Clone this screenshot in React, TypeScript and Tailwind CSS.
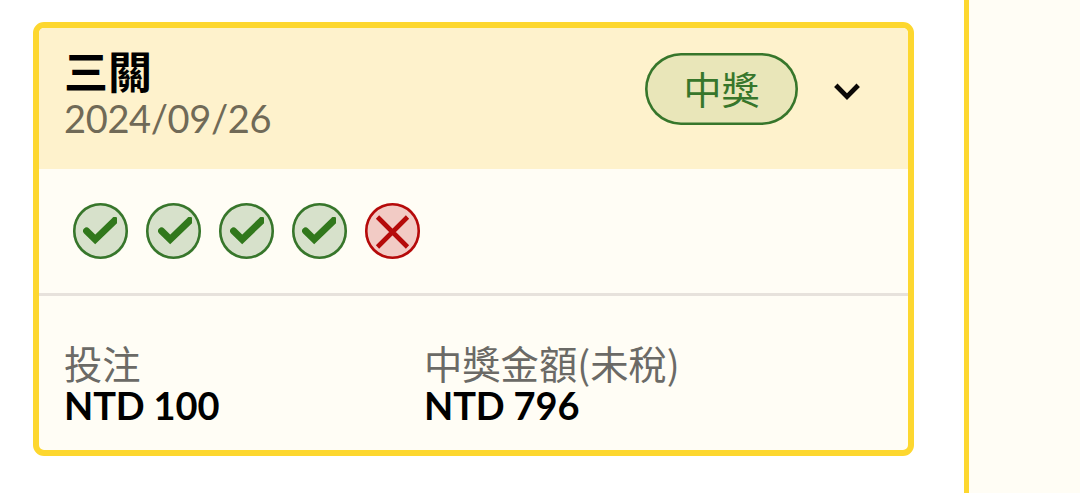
import React from "react";

const checks = ["", "translate-x-[2px]", "translate-x-[1px]", ""];

function CheckBadge({ shift }: { shift: string }) {
  return (
    <div className="w-[55.5px] h-[55.5px] rounded-full shadow-[inset_0_0_0_2.6px_#37762b] bg-[#d7e1cb] flex items-center justify-center">
      <svg className={`w-[34px] h-[28px] shrink-0 -ml-[1px] mt-[1px] ${shift}`} viewBox="0 0 34 28">
        <path
          d="M3.6 13.9 L12.2 22.4 L31.8 3.4"
          fill="none"
          stroke="#31781c"
          strokeWidth="7"
          strokeLinecap="round"
        />
      </svg>
    </div>
  );
}

function CrossBadge() {
  return (
    <div className="w-[55.5px] h-[55.5px] rounded-full shadow-[inset_0_0_0_2.6px_#b50a0a] bg-[#f2cbc5] flex items-center justify-center">
      <svg className="w-[34px] h-[34px] shrink-0 translate-x-[0.5px] translate-y-[1px]" viewBox="0 0 34 34">
        <path d="M2 2 L32 32 M32 2 L2 32" stroke="#b50a0a" strokeWidth="4.6" />
      </svg>
    </div>
  );
}

function Amount({ label, value }: { label: string; value: string }) {
  return (
    <div className="w-[360px]">
      <p className="text-[38.3px] text-[#6b6a66] leading-[42px] font-['Noto_Sans_CJK_TC',sans-serif]">{label}</p>
      <p className="font-bold text-black leading-[42px] tracking-[-0.15px]">{value}</p>
    </div>
  );
}

export default function App() {
  return (
    <div className="flex h-screen overflow-hidden bg-white pl-[33px] text-[38px] font-['Lato','Noto_Sans_CJK_TC',sans-serif]">
      <div className="mt-[22px] w-[881px] h-[434px] shrink-0 flex flex-col rounded-[11px] border-[6px] border-[#fdd72f] bg-[#fffdf5] overflow-hidden">
        <div className="h-[141px] flex bg-[#fef2cc] pl-[25px] pt-[21px]">
          <div className="w-[581px]">
            <h2 className="-mt-[1px] text-[44px] font-bold leading-[48px] text-black">三關</h2>
            <p className="-mt-[1px] leading-[46px] tracking-[-0.35px] text-[#706a57]">2024/09/26</p>
          </div>
          <div className="mt-[3.5px] w-[153px] h-[72.5px] rounded-full shadow-[inset_0_0_0_2.6px_#37762b] bg-[#e9e6b9] text-[#37762b] flex items-center justify-center pt-[2px]">
            中獎
          </div>
          <svg className="ml-[35px] mt-[33px] w-[28px] h-[20px]" viewBox="0 0 28 20">
            <path d="M2.8 3.2 L14 14.6 L25.2 3.2" fill="none" stroke="#0b0806" strokeWidth="4.8" />
          </svg>
        </div>

        <div className="h-[127px] flex gap-[17.5px] pl-[33.5px] pt-[34px] border-b-[3px] border-[#e7e2dc]">
          {checks.map((shift, i) => (
            <CheckBadge key={i} shift={shift} />
          ))}
          <CrossBadge />
        </div>

        <div className="flex pl-[25px] pt-[46px]">
          <Amount label="投注" value="NTD 100" />
          <Amount label="中獎金額(未稅)" value="NTD 796" />
        </div>
      </div>

      <div className="ml-[50px] flex-1 border-l-[5px] border-[#fdd72f] bg-[#fffdf5]" />
    </div>
  );
}
